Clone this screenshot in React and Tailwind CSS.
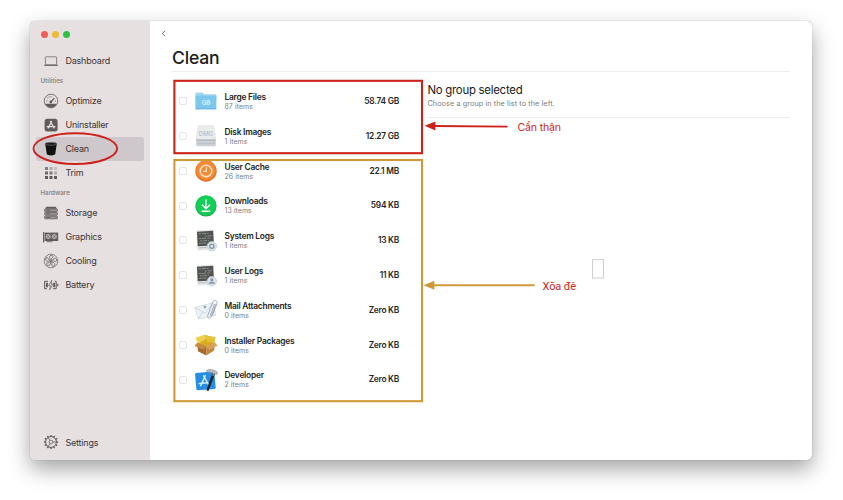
import React from 'react';

const ink = '#625b5d';

function Icon({ children, className = 'h-4 w-4' }) {
  return (
    <svg viewBox="0 0 16 16" className={`${className} shrink-0 overflow-visible`} fill="none" stroke={ink} strokeWidth="0.85">
      {children}
    </svg>
  );
}

const ticks = Array.from({ length: 12 }, (_, i) => i * 30);

const icons = {
  dashboard: (
    <Icon>
      <rect x="2.4" y="3.8" width="11.2" height="8" rx="0.6" strokeWidth="0.7" />
      <path d="M1 12.3h14" strokeWidth="1" />
    </Icon>
  ),
  optimize: (
    <Icon>
      <circle cx="8" cy="8" r="6.8" strokeWidth="0.8" />
      <path d="M2 10.8h12A6.8 6.8 0 0 1 2 10.8z" fill={ink} stroke="none" />
      <path d="M8 9.2l3.2-4" strokeWidth="1.3" />
      <circle cx="7.8" cy="9" r="1.4" fill={ink} stroke="none" />
      <path d="M3.2 8h1.2M4.3 4.8l.9.8M8 3v1.2M12 8h1M5.9 3.6l.4.9" strokeWidth="0.8" />
    </Icon>
  ),
  uninstaller: (
    <Icon>
      <rect x="1.6" y="1.8" width="13" height="12.6" rx="2.6" fill={ink} stroke="none" />
      <path d="M8.8 4L5 11.4M7.2 4l4 7.4M3.8 9.6h5.4M10.8 9.6h1.6" stroke="#eae1e2" strokeWidth="1.2" />
    </Icon>
  ),
  clean: (
    <Icon>
      <path d="M2.2 2.6h11.6l-1.5 10.2c-.3 2.2-8.3 2.2-8.6 0z" fill="#111" stroke="none" />
      <ellipse cx="8" cy="2.8" rx="5.6" ry="1.5" fill="#1c1c1c" stroke="#77757a" strokeWidth="0.6" />
    </Icon>
  ),
  trim: (
    <Icon>
      <g stroke="none" fill={ink}>
        <path d="M2 2h3v3H2z" opacity=".75" />
        <path d="M6.5 2h3v3h-3z" opacity=".4" />
        <path d="M11 2h3v3h-3z" opacity=".25" />
        <path d="M2 6.5h3v3H2z" opacity=".9" />
        <path d="M6.5 6.5h3v3h-3z" opacity=".8" />
        <path d="M11 6.5h3v3h-3z" opacity=".4" />
        <path d="M2 11h3v3H2zM6.5 11h3v3h-3zM11 11h3v3h-3z" />
      </g>
    </Icon>
  ),
  storage: (
    <Icon>
      <path d="M3.4 1.8h9.2l1.4 2H2z" fill={ink} stroke="none" />
      <g fill="#a09698" stroke={ink}>
        <rect x="1.6" y="4" width="12.8" height="2.6" rx=".7" />
        <rect x="1.6" y="7.6" width="12.8" height="2.6" rx=".7" />
        <rect x="1.6" y="11.2" width="12.8" height="2.6" rx=".7" />
      </g>
      <path d="M3.2 5.3h4M3.2 8.9h4M3.2 12.5h4" strokeWidth="0.8" />
    </Icon>
  ),
  graphics: (
    <Icon>
      <path d="M.6 3v10.4" strokeWidth="1.1" />
      <rect x="1.6" y="3.6" width="13.6" height="8.4" fill={ink} stroke="none" />
      <g fill="#bdb3b5" stroke="none">
        <circle cx="5.2" cy="7.6" r="2.5" />
        <circle cx="11.3" cy="7.6" r="2.5" />
      </g>
      <path d="M3.6 6l3.2 3.2M6.8 6L3.6 9.2M9.7 6l3.2 3.2M12.9 6L9.7 9.2" strokeWidth="0.7" />
      <path d="M3.5 12.7h6" />
    </Icon>
  ),
  cooling: (
    <Icon>
      <circle cx="8" cy="8" r="6.8" strokeWidth="0.7" />
      {[0, 72, 144, 216, 288].map((a) => (
        <path key={a} d="M7.7 6.8C6.2 5 6.2 2.8 8 2.3c1.8-.2 2.6 1.3 1.5 2.3-.8.7-1.2 1.2-1 2.2" strokeWidth="0.75" transform={`rotate(${a} 8 8)`} />
      ))}
      <circle cx="8" cy="8" r="1" fill={ink} stroke="none" />
    </Icon>
  ),
  battery: (
    <Icon>
      <path d="M5 4.3H1.6v7.4H4M11.8 4.3h1.4v7.4H10" strokeWidth="1" />
      <path d="M2.9 5.8h2v4.4h-2zM10.2 5.8h1.9v4.4h-1.9z" fill={ink} stroke="none" />
      <path d="M8.8 3.2L5.6 8.6h1.9l-.8 4.2 3.2-5.6H8z" strokeWidth="0.7" />
      <path d="M14.4 6.6v2.8M15.4 7.5v1" strokeWidth="0.8" />
    </Icon>
  ),
  settings: (
    <Icon>
      <circle cx="8" cy="8" r="5.4" strokeWidth="1" />
      <circle cx="8" cy="8" r="1.9" strokeWidth="0.8" />
      {ticks.map((a) => (
        <path key={a} d="M8 2.6V.9" strokeWidth="1.4" transform={`rotate(${a} 8 8)`} />
      ))}
      <path d="M7 6.4L5 3.6M10 8h3.2M7 9.6l-2 2.8" strokeWidth="0.8" />
    </Icon>
  ),
};

function NavItem({ id, label, active }) {
  return (
    <div className={`mx-[6px] flex h-6 items-center gap-[6px] rounded-[3px] pl-[7px] ${active ? 'bg-[#cec7cb]' : ''}`}>
      {icons[id]}
      <span className="text-[9px] leading-none tracking-[-0.2px] text-[#393536]">{label}</span>
    </div>
  );
}

function NavLabel({ children }) {
  return <div className="h-4 pl-[10px] text-[6.2px] leading-4 font-semibold tracking-[0.05px] text-[#8e8587]">{children}</div>;
}

function Art({ children }) {
  return (
    <svg viewBox="0 0 24 24" className="h-6 w-6 shrink-0 overflow-visible">
      {children}
    </svg>
  );
}

function LogArt({ children }) {
  return (
    <Art>
      <g transform="rotate(-3 12 12)">
        <rect x="3" y="2" width="17" height="20" fill="#e3e6e8" />
        <rect x="3.4" y="3.2" width="16.2" height="14.6" fill="#50534f" />
        <g stroke="#999c98" strokeWidth=".8" strokeDasharray="2.4 .8 4 1">
          <path d="M5 5.5h10M11 8h7M5 10.2h12M6 12.6h9M5 15h8" />
        </g>
        <path d="M4 19.5h8" stroke="#adb4ba" strokeWidth=".8" />
      </g>
      <circle cx="17.8" cy="18.2" r="4.7" fill="#dce5ec" stroke="#b5c2cd" strokeWidth=".7" />
      {children}
    </Art>
  );
}

const art = {
  large: (
    <Art>
      <path d="M1.4 4.6c0-.7.4-1 1-1h6l1.8 1.7h11c.8 0 1.2.4 1.2 1.1V10h-21z" fill="#9ed5ef" />
      <rect x="1.4" y="6.8" width="21" height="13.4" rx=".8" fill="#7bc7ed" />
      <path d="M1.6 19.8h20.6" stroke="#5eafd6" strokeWidth=".8" />
      <text x="12" y="15.7" textAnchor="middle" fontFamily="Inter" fontWeight="700" fontSize="6.2" fill="#d2effc">GB</text>
    </Art>
  ),
  disk: (
    <Art>
      <path d="M4.2 1.8h15.6L22 16H2z" fill="#ebecee" stroke="#d7d9dc" strokeWidth=".5" />
      <rect x="2.2" y="15.4" width="19.6" height="6.8" rx="1" fill="#cacfd5" />
      <path d="M2.4 16h19.2" stroke="#a8aeb8" strokeWidth="1.2" />
      <path d="M3 19.5h18" stroke="#b4bac1" strokeWidth=".6" />
      <text x="12" y="11.6" textAnchor="middle" fontFamily="Inter" fontWeight="600" fontSize="6" fill="#c1c4c9">DMG</text>
    </Art>
  ),
  cache: (
    <Art>
      <circle cx="12" cy="12" r="10.7" fill="#e87225" />
      <circle cx="12" cy="11.2" r="9.7" fill="#f58b35" />
      <circle cx="12" cy="12" r="5.8" fill="none" stroke="#ffe6cc" strokeWidth="1.4" />
      <path d="M12.4 8.2v4.2H9" fill="none" stroke="#ffe6cc" strokeWidth="1.2" />
    </Art>
  ),
  downloads: (
    <Art>
      <circle cx="12" cy="12" r="10.6" fill="#0fb54c" />
      <circle cx="12" cy="11.4" r="9.8" fill="#13cf58" />
      <path d="M12 5.4v8.8M8 10.8l4 3.9 4-3.9M7.7 17.2h8.6" fill="none" stroke="#fff" strokeWidth="1.4" />
    </Art>
  ),
  syslogs: (
    <LogArt>
      <circle cx="17.8" cy="18.2" r="2.1" fill="none" stroke="#8292a1" strokeWidth="1.3" />
    </LogArt>
  ),
  userlogs: (
    <LogArt>
      <circle cx="17.8" cy="16.7" r="1.5" fill="#8094a6" />
      <path d="M14.6 20.7c.4-2.6 6-2.6 6.4 0z" fill="#8094a6" />
    </LogArt>
  ),
  mail: (
    <Art>
      <path d="M.8 9.4l18-4.6 3 12.6L4.4 21z" fill="#eef3f7" stroke="#c8d1da" strokeWidth=".6" />
      <path d="M.8 9.4l10.4 5.8 7.6-10.4M4.4 21l4.2-7.2" fill="none" stroke="#c3ced8" strokeWidth=".8" />
      <circle cx="11" cy="9" r="1.4" fill="#92a9be" />
      <path d="M21.8 6.2l-4.7 12.5c-1 2.5-4.2 1.4-3.4-1.1L18.8 4c1.1-2.8 5.1-1.7 4.2 1.3l-4.6 12.4M20.6 6l-4.4 11.6" fill="none" stroke="#8d9ca9" strokeWidth=".8" />
    </Art>
  ),
  installer: (
    <Art>
      <path d="M4.4 5.4L11.4 2l9.2 2.4-.4 6.6-8.4 3-7.4-3.5z" fill="#d8ac22" />
      <path d="M1.4 4.9l9.4-3.4 1.4 4-7.8 4.9z" fill="#efd04d" />
      <path d="M12 3l9.6 1.1-1.4 5.9-7.8-1.8z" fill="#e7c23b" />
      <path d="M3.2 10.2l9 3.2v9L4 18.3z" fill="#a8692c" />
      <path d="M12.2 13.4l8.6-3.8-.6 8-8 4.8z" fill="#c28740" />
      <path d="M3.2 9.6L.6 13l8.8 3.4 2.8-3z" fill="#c58c45" />
      <path d="M20.8 9.2l2.8 3.6-8.4 3.6-3-3z" fill="#d9a35b" />
    </Art>
  ),
  developer: (
    <Art>
      <rect x="1.6" y="4.2" width="19.4" height="17.4" rx="1.2" fill="#258de5" transform="rotate(-5 12 12)" />
      <g fill="none" stroke="#d9f0ff" strokeWidth="1.4">
        <path d="M11.6 7L6.4 18.3M9.3 7.3l6 10.5M4.6 15.6l8.4-.8" />
      </g>
      <path d="M19.8 5.2l-6 16.4" stroke="#23262a" strokeWidth="2.5" strokeLinecap="round" />
      <path d="M20.2 3.8l-1.4 4" stroke="#888f97" strokeWidth="1.6" />
      <path d="M12.6 2.4c2.2-1.6 5-1.4 8.2.2l2.8 1.6-1 2.6-4-1.7c-1.8-.8-3.2-1.2-6-.8z" fill="#b4bbc2" stroke="#79818a" strokeWidth=".4" />
    </Art>
  ),
};

const groups = [
  ['large', 'Large Files', '87 items', '58.74 GB'],
  ['disk', 'Disk Images', '1 items', '12.27 GB'],
  ['cache', 'User Cache', '26 items', '22.1 MB'],
  ['downloads', 'Downloads', '13 items', '594 KB'],
  ['syslogs', 'System Logs', '1 items', '13 KB'],
  ['userlogs', 'User Logs', '1 items', '11 KB'],
  ['mail', 'Mail Attachments', '0 items', 'Zero KB'],
  ['installer', 'Installer Packages', '0 items', 'Zero KB'],
  ['developer', 'Developer', '2 items', 'Zero KB'],
];

function GroupRow({ id, name, items, size }) {
  return (
    <div className="flex h-[34.8px] items-center pl-[7.5px]">
      <div className="h-2 w-2 shrink-0 rounded-[2px] border border-[#e4e4e5] bg-white" />
      <div className="ml-[7px]">{art[id]}</div>
      <div className="ml-[6px] flex-1 pt-[1.6px]">
        <div className="text-[8.4px] leading-[10px] font-semibold tracking-[-0.23px] text-[#232323]">{name}</div>
        <div className="text-[7px] leading-[10px] tracking-[0.05px] text-[#7d7d7d]">{items}</div>
      </div>
      <div className="text-[8.4px] leading-none font-semibold tracking-[-0.26px] text-[#272727]">{size}</div>
    </div>
  );
}

function Annotations() {
  return (
    <div className="pointer-events-none absolute inset-0">
      <svg className="absolute inset-0" width="843" height="500" fill="none">
        <ellipse cx="75.3" cy="148.6" rx="41.8" ry="15.4" stroke="#cd211b" strokeWidth="1.9" />
        <rect x="174.4" y="80.8" width="247.6" height="72.4" stroke="#cc2119" strokeWidth="2.1" />
        <rect x="174.4" y="160" width="247.6" height="241.2" stroke="#cf9936" strokeWidth="2.1" />
        <path d="M433 126l74.5.6" stroke="#cc2119" strokeWidth="1.9" />
        <path d="M424.6 125.8l10.8-4.4v9z" fill="#cc2119" />
        <path d="M433 285.3h101.6" stroke="#cf9936" strokeWidth="1.9" />
        <path d="M423.6 285.3l10.8-4.5v9z" fill="#cf9936" />
        <rect x="592.5" y="259.6" width="11" height="18.4" stroke="#cfcfcf" strokeWidth="1" />
      </svg>
      <span className="absolute top-[121px] left-[517.5px] text-[10.6px] leading-[14px] tracking-[-0.2px] whitespace-nowrap text-[#cd2820]">Cẩn thận</span>
      <span className="absolute top-[280px] left-[542.5px] font-[Roboto,sans-serif] text-[11px] leading-[14px] tracking-[-0.1px] whitespace-nowrap text-[#cd2820]">Xõa đê</span>
    </div>
  );
}

export default function App() {
  return (
    <div className="relative h-[500px] w-[843px] overflow-hidden bg-white pt-[20.6px] pl-[30.4px] font-[Inter,sans-serif]">
      <div className="flex h-[439px] w-[782px] overflow-hidden rounded-[5px] bg-white shadow-[0_0_1px_rgba(0,0,0,0.45),0_9px_21px_rgba(0,0,0,0.36)]">
        <aside className="flex w-[119.8px] shrink-0 flex-col bg-[#e7e0e1]">
          <div className="flex h-7 items-center gap-[4.4px] pl-[10.6px]">
            <i className="h-[6.6px] w-[6.6px] rounded-full bg-[#f45c5b]" />
            <i className="h-[6.6px] w-[6.6px] rounded-full bg-[#eebb35]" />
            <i className="h-[6.6px] w-[6.6px] rounded-full bg-[#2fc045]" />
          </div>
          <NavItem id="dashboard" label="Dashboard" />
          <NavLabel>Utilities</NavLabel>
          <NavItem id="optimize" label="Optimize" />
          <NavItem id="uninstaller" label="Uninstaller" />
          <NavItem id="clean" label="Clean" active />
          <NavItem id="trim" label="Trim" />
          <NavLabel>Hardware</NavLabel>
          <NavItem id="storage" label="Storage" />
          <NavItem id="graphics" label="Graphics" />
          <NavItem id="cooling" label="Cooling" />
          <NavItem id="battery" label="Battery" />
          <div className="mt-auto mb-[5.6px]">
            <NavItem id="settings" label="Settings" />
          </div>
        </aside>
        <main className="flex flex-1 flex-col pr-[22.4px] pl-[21.8px]">
          <div className="-ml-[11px] flex h-[26px] items-center">
            <svg viewBox="0 0 6 8" className="h-[7px] w-[5px]" fill="none" stroke="#555" strokeWidth="1">
              <path d="M5 .8L1.5 4 5 7.2" />
            </svg>
          </div>
          <h1 className="h-[25px] border-b border-[#ececec] text-[17.6px] leading-[21px] font-medium tracking-[-0.2px] text-[#1c1c1c]">Clean</h1>
          <div className="flex flex-1">
            <section className="w-[227px] pt-[12.2px]">
              {groups.map(([id, name, items, size]) => (
                <GroupRow key={id} id={id} name={name} items={items} size={size} />
              ))}
            </section>
            <section className="ml-[28.4px] flex-1">
              <header className="h-[46px] border-b border-[#eeeeee] pt-[11.4px]">
                <h2 className="text-[11.4px] leading-[14px] tracking-[-0.25px] text-[#202020]">No group selected</h2>
                <p className="text-[7.3px] leading-[14px] tracking-[0.07px] text-[#808080]">Choose a group in the list to the left.</p>
              </header>
            </section>
          </div>
        </main>
      </div>
      <Annotations />
    </div>
  );
}
